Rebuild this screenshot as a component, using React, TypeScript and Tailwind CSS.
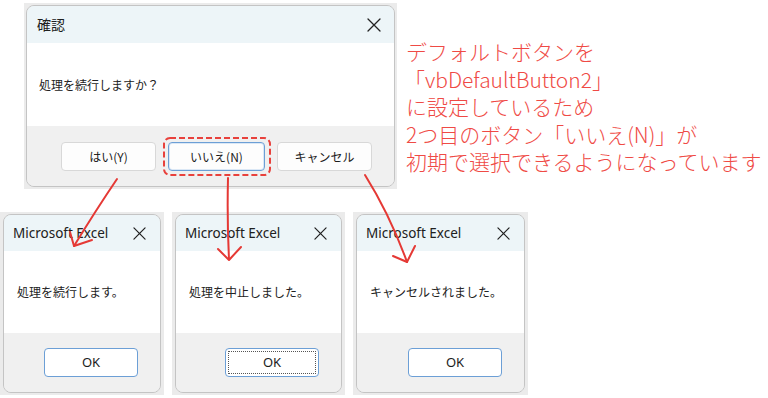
const JP = "font-['Noto_Sans_CJK_JP',sans-serif]";
const LATIN = "font-['Noto_Sans','Noto_Sans_CJK_JP',sans-serif]";

function CloseIcon({ size = 14 }: { size?: number }) {
  return (
    <svg width={size} height={size} viewBox="0 0 14 14" fill="none" stroke="#222" strokeWidth="1.3" strokeLinecap="round">
      <path d="M1 1 L13 13 M13 1 L1 13" />
    </svg>
  );
}

function Button({ label, focused = false, width }: { label: string; focused?: boolean; width: string }) {
  return (
    <div
      className={`relative flex h-[29px] items-center justify-center rounded-[4px] bg-[#fdfdfd] text-[12px] text-[#1b1b1b] ${width} ${
        focused ? 'border border-[#6c9fd6] shadow-[inset_0_0_0_1px_#dbe8f6]' : 'border border-[#d8d8d8]'
      } ${JP}`}
    >
      {label}
      {focused && (
        <svg className="pointer-events-none absolute -left-[6px] -top-[6px]" width="108" height="39">
          <rect x="1" y="1" width="106" height="37" rx="6" fill="none" stroke="#e8413c" strokeWidth="2" strokeDasharray="6 3" />
        </svg>
      )}
    </div>
  );
}

function OkButton({ dotted = false }: { dotted?: boolean }) {
  return (
    <div className="relative flex h-[29px] w-[94px] items-center justify-center rounded-[4px] border border-[#6c9fd6] bg-white text-[13px] text-[#1b1b1b] font-['Noto_Sans',sans-serif]">
      {dotted && <div className="absolute inset-[2px] border border-dotted border-[#555]" />}
      OK
    </div>
  );
}

function SmallDialog({ message, width, dotted = false }: { message: string; width: string; dotted?: boolean }) {
  return (
    <div className="bg-[#ebebeb] px-[3px] py-[2px]">
      <div className={`flex h-[179px] flex-col overflow-hidden rounded-[8px] border border-[#c4c4c4] ${width}`}>
        <div className="flex h-[36px] items-center justify-between bg-[#edf5f8] pl-[9px] pr-[14px]">
          <span className={`text-[13.5px] text-[#202020] ${LATIN}`}>Microsoft Excel</span>
          <CloseIcon size={13} />
        </div>
        <div className={`flex h-[82px] items-center bg-white pl-[13px] text-[12px] text-[#222] ${JP}`}>{message}</div>
        <div className="flex flex-1 justify-end bg-[#f0f0f0] pr-[22px] pt-[15px]">
          <OkButton dotted={dotted} />
        </div>
      </div>
    </div>
  );
}

export default function App() {
  return (
    <div className="relative h-[398px] w-[768px] overflow-hidden bg-white">
      <div className="flex pl-[24px] pt-[3px]">
        <div className="bg-[#ebebeb] p-[2px]">
          <div className="flex h-[182px] w-[369px] flex-col overflow-hidden rounded-[8px] border border-[#c4c4c4]">
            <div className="flex h-[37px] items-center justify-between bg-[#edf5f8] pl-[10px] pr-[13px]">
              <span className={`text-[14px] text-[#202020] ${JP}`}>確認</span>
              <CloseIcon />
            </div>
            <div className={`flex h-[83px] items-center bg-white pl-[12px] text-[12px] text-[#222] ${JP}`}>
              処理を続行しますか？
            </div>
            <div className="flex flex-1 gap-[12px] bg-[#f0f0f0] pl-[34px] pt-[16px]">
              <Button label="はい(Y)" width="w-[95px]" />
              <Button label="いいえ(N)" width="w-[97px]" focused />
              <Button label="キャンセル" width="w-[95px]" />
            </div>
          </div>
        </div>
        <div className={`ml-[9px] mt-[35px] text-[21px] font-light leading-[27.5px] text-[#ef4a45] ${JP}`}>
          <div>デフォルトボタンを</div>
          <div className="-ml-[2px]">「vbDefaultButton2」</div>
          <div>に設定しているため</div>
          <div>2つ目のボタン「いいえ(N)」が</div>
          <div>初期で選択できるようになっています</div>
        </div>
      </div>

      <div className="mt-[23px] flex gap-[8px]">
        <SmallDialog message="処理を続行します。" width="w-[158px]" />
        <SmallDialog message="処理を中止しました。" width="w-[167px]" dotted />
        <SmallDialog message="キャンセルされました。" width="w-[169px]" />
      </div>

      <svg className="pointer-events-none absolute left-0 top-0" width="768" height="398" fill="none" stroke="#e53935" strokeWidth="2" strokeLinecap="round" strokeLinejoin="round">
        <path d="M117 179 Q96 210 74 246" />
        <path d="M70 232 L74 246 L92 240" />
        <path d="M228 178 Q227 220 229 259" />
        <path d="M218 249 L229 260 L241 247" />
        <path d="M365 175 Q390 215 407 262" />
        <path d="M393 256 L407 262 L415 246" />
      </svg>
    </div>
  );
}
